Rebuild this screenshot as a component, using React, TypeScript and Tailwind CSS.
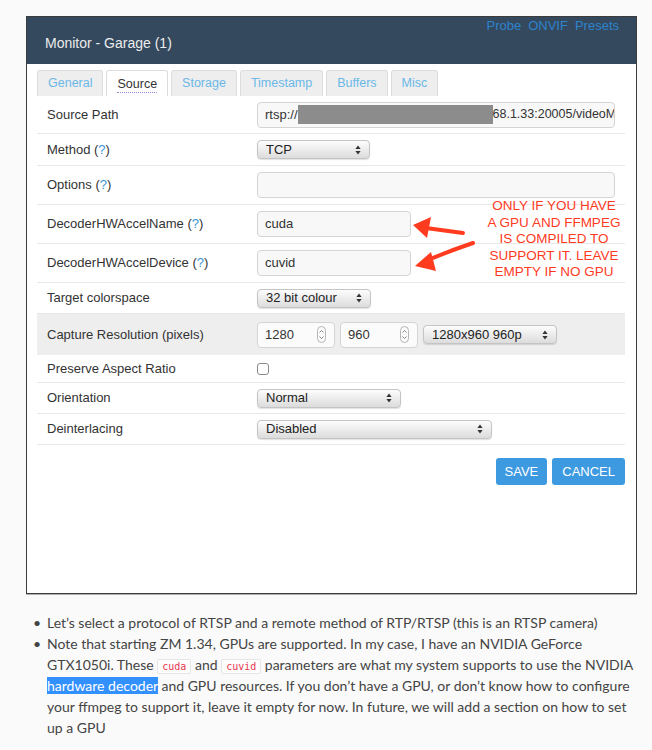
import React from "react";

const ui = "font-['Liberation_Sans',Arial,sans-serif]";

function SelectArrows() {
  return (
    <svg width="6" height="10" viewBox="0 0 6 10" className="shrink-0">
      <path d="M3 0.5 L5.6 4 L0.4 4 Z" fill="#333" />
      <path d="M3 9.5 L5.6 6 L0.4 6 Z" fill="#333" />
    </svg>
  );
}

function Spinner() {
  return (
    <div className="w-[9px] h-[17px] rounded-full border border-[#b5b5b5] flex flex-col items-center justify-center gap-[3px] shrink-0">
      <svg width="5" height="3" viewBox="0 0 5 3">
        <path d="M0.5 2.5 L2.5 0.5 L4.5 2.5" fill="none" stroke="#777" strokeWidth="0.9" />
      </svg>
      <svg width="5" height="3" viewBox="0 0 5 3">
        <path d="M0.5 0.5 L2.5 2.5 L4.5 0.5" fill="none" stroke="#777" strokeWidth="0.9" />
      </svg>
    </div>
  );
}

function Select({ value, width }: { value: string; width: string }) {
  return (
    <div
      className={`${width} h-[19px] rounded-[4px] border border-[#c4c4c4] bg-gradient-to-b from-[#fdfdfd] to-[#dcdcdc] shadow-[0_1px_1px_rgba(0,0,0,0.12)] flex items-center justify-between pl-[8px] pr-[8px] text-[13px] text-[#222]`}
    >
      <span>{value}</span>
      <SelectArrows />
    </div>
  );
}

function TextInput({ value, width }: { value?: string; width: string }) {
  return (
    <div
      className={`${width} h-[26px] rounded-[4px] border border-[#d4d4d4] bg-[#f8f8f8] flex items-center px-[7px] text-[13px] text-[#333] overflow-hidden whitespace-nowrap`}
    >
      {value}
    </div>
  );
}

function NumberInput({ value }: { value: string }) {
  return (
    <div className="w-[78px] h-[26px] rounded-[4px] border border-[#d4d4d4] bg-[#fbfbfb] flex items-center justify-between pl-[7px] pr-[8px] text-[13px] text-[#333]">
      <span>{value}</span>
      <Spinner />
    </div>
  );
}

function Help() {
  return (
    <>
      {" "}(<span className="text-[#3a95d8]">?</span>)
    </>
  );
}

interface RowProps {
  label: React.ReactNode;
  height: string;
  shaded?: boolean;
  children?: React.ReactNode;
}

function Row({ label, height, shaded, children }: RowProps) {
  return (
    <div className={`flex items-center ${height} ${shaded ? "bg-[#eeeeee]" : "border-b border-[#e8e8e8]"}`}>
      <div className="w-[220px] pl-[10px] text-[13px] text-[#333] shrink-0">{label}</div>
      <div className="flex items-center gap-[5px]">{children}</div>
    </div>
  );
}

const tabs = ["General", "Source", "Storage", "Timestamp", "Buffers", "Misc"];

const codeCls =
  "font-['DejaVu_Sans_Mono',monospace] text-[10px] leading-[12px] text-[#e8364f] bg-[#fdfdfd] border border-[#e6e6e6] rounded-[2px] px-[4px] py-[1px] align-baseline";

export default function App() {
  return (
    <div className="relative w-[652px] h-[750px] bg-[#fafafa] overflow-hidden">
      <div className="pt-[16px] pl-[26px]">
        {/* monitor settings dialog */}
        <div className={`w-[611px] h-[578px] border border-[#3c3c3c] bg-white shadow-[0_1px_0_#b0b0b0] ${ui}`}>
          <div className="h-[47px] bg-[#34495e] px-[18px]">
            <div className="flex justify-end gap-[7px] text-[13px] leading-[17px] text-[#2d84cc] -mr-[1px]">
              <span>Probe</span>
              <span>ONVIF</span>
              <span>Presets</span>
            </div>
            <div className="text-[14px] leading-[18px] text-[#ececec]">Monitor - Garage (1)</div>
          </div>

          <div className="flex gap-[3px] pl-[10px] mt-[6px]">
            {tabs.map((t) =>
              t === "Source" ? (
                <div
                  key={t}
                  className="h-[26px] px-[10px] flex items-center rounded-t-[3px] border border-b-0 border-[#dcdcdc] bg-white text-[12.5px] text-[#333]"
                >
                  <span className="border-b border-dotted border-[#8f86d6] leading-[15px] translate-y-[1px]">{t}</span>
                </div>
              ) : (
                <div
                  key={t}
                  className="h-[26px] px-[10px] flex items-center rounded-t-[3px] border border-b-0 border-[#dcdcdc] bg-[#eeeeee] text-[12.5px] text-[#6ab8e8]"
                >
                  {t}
                </div>
              )
            )}
          </div>

          <div className="pl-[10px] pr-[11px]">
            <Row label="Source Path" height="h-[38px]">
              <div className="w-[358px] h-[26px] rounded-[4px] border border-[#d4d4d4] bg-[#f8f8f8] flex items-center pl-[7px] text-[13px] text-[#333] overflow-hidden whitespace-nowrap">
                <span>rtsp://</span>
                <span className="inline-block w-[195px] h-[19px] bg-[#8c8c8c] shrink-0" />
                <span className="text-[12.5px]">68.1.33:20005/videoM</span>
              </div>
            </Row>
            <Row label={<>Method<Help /></>} height="h-[32px]">
              <Select value="TCP" width="w-[113px]" />
            </Row>
            <Row label={<>Options<Help /></>} height="h-[39px]">
              <TextInput width="w-[358px]" />
            </Row>
            <Row label={<>DecoderHWAccelName<Help /></>} height="h-[39px]">
              <TextInput value="cuda" width="w-[154px]" />
            </Row>
            <Row label={<>DecoderHWAccelDevice<Help /></>} height="h-[39px]">
              <TextInput value="cuvid" width="w-[154px]" />
            </Row>
            <Row label="Target colorspace" height="h-[31px]">
              <Select value="32 bit colour" width="w-[114px]" />
            </Row>
            <Row label="Capture Resolution (pixels)" height="h-[41px]" shaded>
              <NumberInput value="1280" />
              <NumberInput value="960" />
              <Select value="1280x960 960p" width="w-[134px]" />
            </Row>
            <Row label="Preserve Aspect Ratio" height="h-[28px]">
              <div className="w-[12px] h-[12px] rounded-[3px] border border-[#8a8a8a] bg-white" />
            </Row>
            <Row label="Orientation" height="h-[31px]">
              <Select value="Normal" width="w-[144px]" />
            </Row>
            <Row label="Deinterlacing" height="h-[31px]">
              <Select value="Disabled" width="w-[235px]" />
            </Row>

            <div className="flex justify-end gap-[5px] mt-[13px]">
              <button className="h-[27px] px-[9px] rounded-[3px] bg-[#3d9ae0] text-white text-[13px]">SAVE</button>
              <button className="h-[27px] px-[10px] rounded-[3px] bg-[#3d9ae0] text-white text-[13px]">CANCEL</button>
            </div>
          </div>
        </div>
      </div>

      {/* post text under the screenshot */}
      <ul className="mt-[18px] pl-[33px] pr-[14px] font-['Lato','Open_Sans',sans-serif] text-[14px] leading-[21px] text-[#444]">
        <li className="flex">
          <span className="w-[14px] shrink-0">•</span>
          <span>Let’s select a protocol of RTSP and a remote method of RTP/RTSP (this is an RTSP camera)</span>
        </li>
        <li className="flex">
          <span className="w-[14px] shrink-0">•</span>
          <span>
            Note that starting ZM 1.34, GPUs are supported. In my case, I have an NVIDIA GeForce
            <br />
            GTX1050i. These <code className={codeCls}>cuda</code> and <code className={codeCls}>cuvid</code> parameters
            are what my system supports to use the NVIDIA
            <br />
            <span className="bg-[#3390ff] text-white">hardware decoder</span> and GPU resources. If you don’t have a GPU, or
            don’t know how to configure
            <br />
            your ffmpeg to support it, leave it empty for now. In future, we will add a section on how to set
            <br />
            up a GPU
          </span>
        </li>
      </ul>

      {/* red annotation over the form */}
      <div className={`absolute left-[478px] top-[198px] w-[152px] text-center text-[13.5px] leading-[16.5px] text-[#ff3b1f] ${ui}`}>
        ONLY IF YOU HAVE
        <br />A GPU AND FFMPEG
        <br />IS COMPILED TO
        <br />SUPPORT IT. LEAVE
        <br />EMPTY IF NO GPU
      </div>
      <svg className="absolute left-0 top-0 pointer-events-none" width="652" height="750">
        <line x1="463" y1="233" x2="426" y2="228" stroke="#ff3b1f" strokeWidth="4" strokeLinecap="round" />
        <path d="M413 225 L431 217 L427 238 Z" fill="#ff3b1f" />
        <path d="M473 243 Q452 250 428 260" fill="none" stroke="#ff3b1f" strokeWidth="4" strokeLinecap="round" />
        <path d="M415 266 L431 252 L436 271 Z" fill="#ff3b1f" />
      </svg>
    </div>
  );
}
